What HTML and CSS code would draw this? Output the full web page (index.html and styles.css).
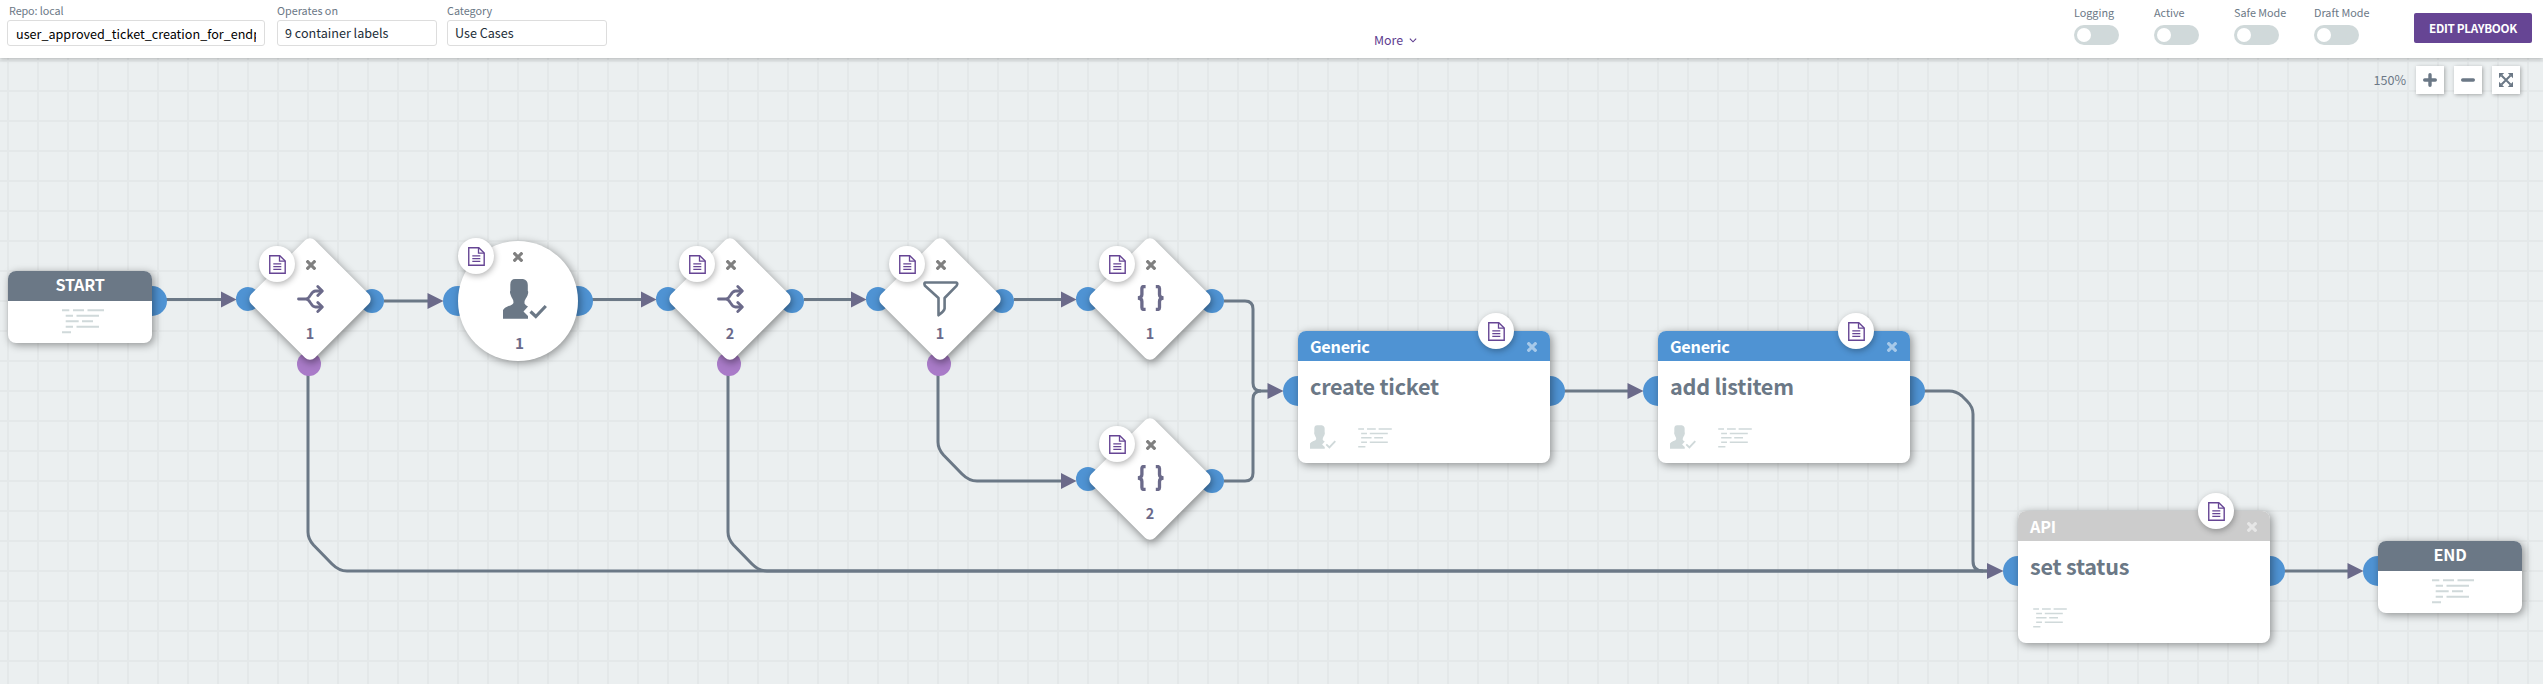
FILE: index.html
```html
<!DOCTYPE html>
<html lang="en">
<head>
<meta charset="utf-8">
<title>Playbook editor</title>
<link rel="stylesheet" href="styles.css">
</head>
<body>
<svg class="sprite" aria-hidden="true">
  <symbol id="i-doc" viewBox="0 0 17 19">
    <path d="M.75.75H10.8L16.2 6V18.2H.75Z" fill="none" stroke="currentColor" stroke-width="1.4"/>
    <path d="M10.5 1V6.2H16.2" fill="none" stroke="currentColor" stroke-width="1.3"/>
    <path d="M4.3 8.9H12.3M4.3 11.6H12.3M4.3 14.3H12.3" stroke="currentColor" stroke-width="1.3"/>
  </symbol>
  <symbol id="i-x" viewBox="0 0 10 10">
    <path d="M1.7 1.7L8.3 8.3M8.3 1.7L1.7 8.3" stroke="currentColor" stroke-width="3.1" stroke-linecap="square" stroke-linejoin="round"/>
  </symbol>
  <symbol id="i-split" viewBox="0 0 27 28">
    <path d="M1.5 14H9C13.5 14 13.5 6 18.5 6H24M9 14C13.5 14 13.5 22 18.5 22H24" fill="none" stroke="currentColor" stroke-width="2.8" stroke-linecap="round"/>
    <path d="M20.8 1.6L25.3 6L20.8 10.6M20.8 17.4L25.3 22L20.8 26.4" fill="none" stroke="currentColor" stroke-width="2.8" stroke-linecap="round" stroke-linejoin="round"/>
  </symbol>
  <symbol id="i-braces" viewBox="0 0 28 26">
    <path d="M8.6 1.5H7Q4.9 1.5 4.9 3.6V9.6Q4.9 12.6 1 13Q4.9 13.4 4.9 16.4V22.4Q4.9 24.5 7 24.5H8.6M18.8 1.5H20.4Q22.5 1.5 22.5 3.6V9.6Q22.5 12.6 26.4 13Q22.5 13.4 22.5 16.4V22.4Q22.5 24.5 20.4 24.5H18.8" fill="none" stroke="currentColor" stroke-width="3.3"/>
  </symbol>
  <symbol id="i-filter" viewBox="0 0 36 36">
    <path d="M2 1.5H33.5Q35 2.5 33.5 4.8L21.6 17V27.5Q21.3 30 15.5 34.3V17L2 4.8Q.8 2.5 2 1.5Z" fill="none" stroke="currentColor" stroke-width="2.6" stroke-linejoin="round"/>
  </symbol>
  <symbol id="i-user" viewBox="0 0 44 40">
    <path d="M12 0H20Q24.8 1 24.8 6V12Q25.8 12.5 24.5 16.5Q23.6 18.5 22.8 19.5Q21.5 21 21.5 24.5Q22.5 26.5 25 27.5L20.5 32.5L25 37V39.8H0V31Q1.5 28.5 5 27.3Q10.5 25.5 10.5 23.5Q10.5 21 9.3 19.5Q8.3 18 7.5 15.5Q6.5 12.5 7.3 12V5.5Q7.5 0 12 0Z" fill="currentColor"/>
    <path d="M27.5 32.5L32.8 37.5L42.8 27" fill="none" stroke="currentColor" stroke-width="3.2"/>
  </symbol>
  <symbol id="i-code" viewBox="0 0 42 25">
    <path d="M0 1.2H7.3M11 1.2H22M25.5 1.2H42M3.7 6.8H11M14.5 6.8H37M3.7 12.3H16.7M20 12.3H31M3.7 17.8H11M14.5 17.8H37M0 23.3H9" stroke="currentColor" stroke-width="1.9"/>
  </symbol>
</svg>

<header class="topbar">
  <div class="fields">
    <div class="field field-repo"><span class="label">Repo: local</span><input class="input input-dark" type="text" value="user_approved_ticket_creation_for_endpoint"></div>
    <div class="field"><span class="label">Operates on</span><div class="input">9 container labels</div></div>
    <div class="field"><span class="label">Category</span><div class="input">Use Cases</div></div>
  </div>
  <div class="more">More <svg class="chevron" viewBox="0 0 9 6"><path d="M.7 .8L4.5 4.6L8.3 .8" fill="none" stroke="currentColor" stroke-width="1.3"/></svg></div>
  <div class="actions">
    <div class="toggle"><span class="label">Logging</span><div class="switch"><span class="knob"></span></div></div>
    <div class="toggle"><span class="label">Active</span><div class="switch"><span class="knob"></span></div></div>
    <div class="toggle"><span class="label">Safe Mode</span><div class="switch"><span class="knob"></span></div></div>
    <div class="toggle"><span class="label">Draft Mode</span><div class="switch"><span class="knob"></span></div></div>
    <div class="edit">EDIT PLAYBOOK</div>
  </div>
</header>

<main class="canvas">
  <svg class="wires" viewBox="0 58 2543 626">
    <g class="wire">
      <path d="M160 299.5H224M384 301H430M592 299.5H644M804 299.5H854M1014 299.5H1064"/>
      <path d="M1224 301H1245Q1253 301 1253 309V383Q1253 391 1261 391H1270"/>
      <path d="M1224 481H1245Q1253 481 1253 473V399Q1253 391 1261 391"/>
      <path d="M938 370V442Q938 449 943.5 455L962 474Q969 481 977 481H1064"/>
      <path d="M308 370V532Q308 539 313.5 545L332 564Q339 571 347 571H1990"/>
      <path d="M728 370V532Q728 539 733.5 545L752 564Q759 571 767 571H1990"/>
      <path d="M1560 391H1630M1920 391H1949Q1956 391 1962 396L1967 401Q1973 407 1973 414V561Q1973 571 1983 571"/>
      <path d="M2280 571H2350"/>
    </g>
    <g class="arrow">
      <path d="M221 291.5V307.5L236.5 299.5Z"/>
      <path d="M427.5 293V309L443.5 301Z"/>
      <path d="M641 291.5V307.5L656.5 299.5Z"/>
      <path d="M851 291.5V307.5L866.5 299.5Z"/>
      <path d="M1061 291.5V307.5L1076.5 299.5Z"/>
      <path d="M1061 473V489L1076.5 481Z"/>
      <path d="M1267.5 383V399L1283.5 391Z"/>
      <path d="M1627.5 383V399L1643.5 391Z"/>
      <path d="M1987 563V579L2003.5 571Z"/>
      <path d="M2347.5 563V579L2363.5 571Z"/>
    </g>
  </svg>

  <div class="node terminal at-start">
    <i class="port port-out"></i>
    <div class="card"><div class="bar">START</div><div class="slot"><svg class="code"><use href="#i-code"/></svg></div></div>
  </div>

  <div class="node decision at-d1">
    <i class="port port-in"></i><i class="port port-out"></i><i class="port port-else"></i>
    <div class="shape"></div>
    <div class="face"><svg class="x"><use href="#i-x"/></svg><svg class="split"><use href="#i-split"/></svg><span class="num">1</span></div>
    <div class="note"><svg class="doc"><use href="#i-doc"/></svg></div>
  </div>

  <div class="node prompt at-prompt">
    <i class="port port-in"></i><i class="port port-out"></i>
    <div class="disc"><svg class="x"><use href="#i-x"/></svg><svg class="user"><use href="#i-user"/></svg><span class="num">1</span></div>
    <div class="note"><svg class="doc"><use href="#i-doc"/></svg></div>
  </div>

  <div class="node decision at-d2">
    <i class="port port-in"></i><i class="port port-out"></i><i class="port port-else"></i>
    <div class="shape"></div>
    <div class="face"><svg class="x"><use href="#i-x"/></svg><svg class="split"><use href="#i-split"/></svg><span class="num">2</span></div>
    <div class="note"><svg class="doc"><use href="#i-doc"/></svg></div>
  </div>

  <div class="node decision at-filter">
    <i class="port port-in"></i><i class="port port-out"></i><i class="port port-else"></i>
    <div class="shape"></div>
    <div class="face"><svg class="x"><use href="#i-x"/></svg><svg class="filter"><use href="#i-filter"/></svg><span class="num">1</span></div>
    <div class="note"><svg class="doc"><use href="#i-doc"/></svg></div>
  </div>

  <div class="node decision at-format1">
    <i class="port port-in"></i><i class="port port-out"></i>
    <div class="shape"></div>
    <div class="face"><svg class="x"><use href="#i-x"/></svg><svg class="braces"><use href="#i-braces"/></svg><span class="num">1</span></div>
    <div class="note"><svg class="doc"><use href="#i-doc"/></svg></div>
  </div>

  <div class="node decision at-format2">
    <i class="port port-in"></i><i class="port port-out"></i>
    <div class="shape"></div>
    <div class="face"><svg class="x"><use href="#i-x"/></svg><svg class="braces"><use href="#i-braces"/></svg><span class="num">2</span></div>
    <div class="note"><svg class="doc"><use href="#i-doc"/></svg></div>
  </div>

  <div class="node action at-ticket">
    <i class="port port-in"></i><i class="port port-out"></i>
    <div class="card">
      <div class="bar">Generic<svg class="x"><use href="#i-x"/></svg></div>
      <div class="title">create ticket</div>
      <div class="meta"><svg class="user-sm"><use href="#i-user"/></svg><svg class="code-sm"><use href="#i-code"/></svg></div>
    </div>
    <div class="note"><svg class="doc"><use href="#i-doc"/></svg></div>
  </div>

  <div class="node action at-list">
    <i class="port port-in"></i><i class="port port-out"></i>
    <div class="card">
      <div class="bar">Generic<svg class="x"><use href="#i-x"/></svg></div>
      <div class="title">add listitem</div>
      <div class="meta"><svg class="user-sm"><use href="#i-user"/></svg><svg class="code-sm"><use href="#i-code"/></svg></div>
    </div>
    <div class="note"><svg class="doc"><use href="#i-doc"/></svg></div>
  </div>

  <div class="node action api at-status">
    <i class="port port-in"></i><i class="port port-out"></i>
    <div class="card">
      <div class="bar">API<svg class="x"><use href="#i-x"/></svg></div>
      <div class="title">set status</div>
      <div class="meta"><svg class="code-sm"><use href="#i-code"/></svg></div>
    </div>
    <div class="note"><svg class="doc"><use href="#i-doc"/></svg></div>
  </div>

  <div class="node terminal at-end">
    <i class="port port-in"></i>
    <div class="card"><div class="bar">END</div><div class="slot"><svg class="code"><use href="#i-code"/></svg></div></div>
  </div>

  <div class="zoom">
    <span class="percent">150%</span>
    <div class="zbtn"><svg viewBox="0 0 14 14"><path d="M7 1.7V12.3M1.7 7H12.3" stroke="currentColor" stroke-width="3.4" stroke-linecap="round"/></svg></div>
    <div class="zbtn"><svg viewBox="0 0 14 14"><path d="M1.7 7H12.3" stroke="currentColor" stroke-width="3.4" stroke-linecap="round"/></svg></div>
    <div class="zbtn"><svg viewBox="0 0 14 14"><path d="M2.5 2.5L11.5 11.5M11.5 2.5L2.5 11.5" stroke="currentColor" stroke-width="2"/><path d="M0 0H5.2L0 5.2ZM14 0V5.2L8.8 0ZM0 14V8.8L5.2 14ZM14 14H8.8L14 8.8Z" fill="currentColor"/></svg></div>
  </div>
</main>
</body>
</html>
```

FILE: styles.css
```css
* { box-sizing: border-box; }

body {
  margin: 0;
  width: 2543px;
  height: 684px;
  overflow: hidden;
  display: flex;
  flex-direction: column;
  font-family: "Noto Sans CJK SC", "Noto Sans", sans-serif;
  color: #6b7886;
}

svg { display: block; }
.sprite { position: absolute; width: 0; height: 0; }

/* Top bar */
.topbar {
  position: relative;
  z-index: 2;
  flex: none;
  height: 58px;
  display: flex;
  background: #fff;
  box-shadow: 0 1px 4px rgba(0, 0, 0, .26);
}
.fields { display: flex; gap: 10px; padding-left: 7px; width: 1374px; }
.field { width: 160px; }
.field-repo { width: 258px; margin-right: 2px; }
.label { display: block; font-size: 10.8px; line-height: 14px; white-space: nowrap; }
.field .label { margin-top: 3px; margin-bottom: 3px; }
.field-repo .label { padding-left: 2px; letter-spacing: -.1px; }
.input {
  display: block;
  width: 100%;
  height: 26px;
  border: 1px solid #ddd;
  border-radius: 3px;
  padding: 0 7px;
  margin: 0;
  background: #fff;
  font-family: inherit;
  font-size: 12.6px;
  line-height: 24px;
  color: #222d38;
  white-space: nowrap;
}
.input-dark { color: #000; padding: 0 8px; }
.more {
  display: flex;
  align-items: center;
  gap: 6px;
  height: 18px;
  margin-top: 31px;
  font-size: 12.4px;
  color: #5e3d8f;
}
.chevron { width: 8px; height: 5px; }
.actions { display: flex; margin-left: auto; padding-right: 11px; }
.toggle { width: 80px; padding-top: 5px; }
.toggle .label { margin-bottom: 6px; }
.switch { width: 45px; height: 20px; padding: 3px; border-radius: 10px; background: #d0d9da; }
.knob { display: block; width: 14px; height: 14px; border-radius: 50%; background: #fff; }
.edit {
  width: 118px;
  height: 30px;
  margin: 13px 0 0 20px;
  border-radius: 2px;
  background: #664594;
  color: #fff;
  font-size: 11.7px;
  font-weight: 700;
  letter-spacing: -.3px;
  line-height: 29px;
  text-align: center;
}

/* Canvas */
.canvas {
  position: relative;
  flex: 1;
  background-color: #ebeff0;
  background-image:
    linear-gradient(90deg, #e4e8e9 2px, transparent 2px),
    linear-gradient(#e4e8e9 2px, transparent 2px);
  background-size: 30px 30px;
  background-position: 7px 2px;
}
.wires { position: absolute; inset: 0; width: 2543px; height: 626px; }
.wire { fill: none; stroke: #6b7886; stroke-width: 3; }
.arrow { fill: #6b6a8a; }

/* Node positions on the canvas; origin is the node's top-left */
.node { position: absolute; }
.at-start { left: 8px; top: 213px; }
.at-d1 { left: 250px; top: 181px; }
.at-prompt { left: 458px; top: 183px; }
.at-d2 { left: 670px; top: 181px; }
.at-filter { left: 880px; top: 181px; }
.at-format1 { left: 1090px; top: 181px; }
.at-format2 { left: 1090px; top: 361px; }
.at-ticket { left: 1298px; top: 273px; }
.at-list { left: 1658px; top: 273px; }
.at-status { left: 2018px; top: 453px; }
.at-end { left: 2378px; top: 483px; }

.port { position: absolute; width: 30px; height: 30px; border-radius: 50%; background: #4f93d3; }
.port-in { left: -15px; }
.port-out { right: -15px; }
.terminal .port { top: 15px; }
.action .port { top: 45px; }
.prompt .port { top: 45px; }
.decision .port { width: 24px; height: 24px; }
.decision .port-in { left: -14px; top: 48px; }
.decision .port-out { left: 110px; right: auto; top: 50px; }
.decision .port-else { left: 47px; top: 113px; background: #a97bc8; }

.card {
  position: relative;
  border-radius: 8px;
  background: #fff;
  box-shadow: 2px 2px 8px rgba(0, 0, 0, .4);
}
.bar {
  height: 30px;
  border-radius: 8px 8px 0 0;
  color: #fff;
  font-size: 16.2px;
  font-weight: 700;
  letter-spacing: -.25px;
  line-height: 30px;
}
.terminal .card { width: 144px; height: 72px; }
.terminal .bar { background: #6b7886; text-align: center; line-height: 27px; }
.slot { padding: 8px 0 0 54px; }
.code { width: 42px; height: 25px; color: #d0d9da; }

.action .card { width: 252px; height: 132px; }
.action .bar {
  display: flex;
  align-items: center;
  justify-content: space-between;
  padding: 0 13px 0 12px;
  background: #4f93d3;
}
.action .bar .x { color: rgba(255, 255, 255, .5); margin-top: 2px; }
.api .bar { background: #ccc; }
.title {
  padding: 9px 12px 0;
  font-size: 21.6px;
  font-weight: 700;
  letter-spacing: -.25px;
  line-height: 32px;
}
.meta { display: flex; gap: 22px; padding: 23px 12px 0; color: #d0d9da; }
.user-sm { width: 26px; height: 24px; }
.code-sm { width: 34px; height: 20px; margin-top: 3px; }
.api .meta { padding-left: 15px; }

.shape {
  position: absolute;
  left: 15px;
  top: 15px;
  width: 90px;
  height: 90px;
  border-radius: 7px;
  background: #fff;
  transform: rotate(45deg);
  box-shadow: 3px 1px 8px rgba(0, 0, 0, .45);
}
.decision { width: 120px; height: 120px; }
.face, .disc {
  position: relative;
  width: 120px;
  height: 120px;
  display: grid;
  justify-items: center;
  align-items: center;
  color: #6b6a8a;
}
.face { padding-top: 6px; grid-template-rows: 40px 28px 42px; }
.face .x, .disc .x { color: #808080; }
.face .x { margin-left: 1px; }
.disc {
  border-radius: 50%;
  background: #fff;
  box-shadow: 2px 2px 8px rgba(0, 0, 0, .4);
  grid-template-rows: 32px 52px 36px;
}
.x { width: 10px; height: 10px; }
.split { width: 27px; height: 28px; }
.face .braces { width: 28px; height: 26px; margin-left: 2px; margin-top: -2px; }
.filter { width: 36px; height: 36px; color: #6b7886; margin-left: 2px; }
.user { width: 44px; height: 40px; color: #6b7886; margin-left: 14px; }
.num { font-size: 14.4px; font-weight: 700; line-height: 20px; }
.face .num { margin-top: -2px; }
.disc .num { font-size: 15.3px; margin-left: 3px; margin-top: -2px; }

.note {
  position: absolute;
  width: 36px;
  height: 36px;
  display: flex;
  align-items: center;
  justify-content: center;
  border-radius: 50%;
  background: #fff;
  color: #664594;
  box-shadow: 1px 2px 6px rgba(0, 0, 0, .3);
}
.doc { width: 17px; height: 19px; }
.decision .note { left: 9px; top: 7px; }
.prompt .note { left: 0; top: -3px; }
.action .note { left: 180px; top: -18px; }

/* Zoom controls */
.zoom { position: absolute; top: 8px; right: 23px; display: flex; align-items: center; gap: 10px; }
.percent { font-size: 12.6px; line-height: 20px; }
.zbtn {
  width: 28px;
  height: 28px;
  display: flex;
  align-items: center;
  justify-content: center;
  background: #fff;
  box-shadow: 1px 1px 4px rgba(0, 0, 0, .3);
}
.zbtn svg { width: 14px; height: 14px; }
```
